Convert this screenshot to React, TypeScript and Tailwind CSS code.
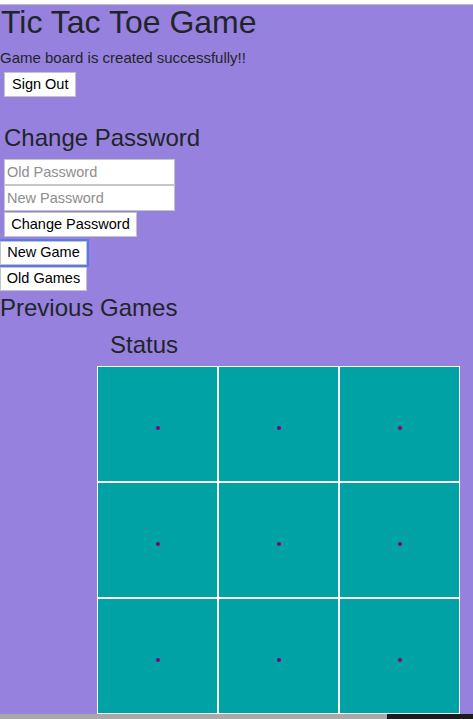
import React from 'react'

const cells = [0, 1, 2, 3, 4, 5, 6, 7, 8]

function Cell() {
    return (
        <div className="border border-white bg-[#00a2a6] flex items-center justify-center">
            <div className="w-[4px] h-[4px] rounded-full bg-[#800080] mt-[7px]" />
        </div>
    )
}

export default function App() {
    return (
        <div className="w-[473px] h-[719px] overflow-hidden bg-white font-['Liberation_Sans',Arial,sans-serif] text-[#212529]">
            <div className="h-[4px] bg-white border-b border-[#bdbdbd] box-content" />
            <main className="bg-[#9781de] flex flex-col items-start">
                <h1 className="text-[32px] leading-[32px] mt-[1px] ml-[1px]">Tic Tac Toe Game</h1>
                <p className="text-[15px] leading-[18px] mt-[11px]">Game board is created successfully!!</p>
                <button className="mt-[5px] ml-[4px] h-[25px] px-[7px] bg-white border border-[#c4c4c4] text-[14.5px] text-black">
                    Sign Out
                </button>

                <h3 className="text-[24px] leading-[28px] mt-[27px] ml-[4px]">Change Password</h3>
                <form className="flex flex-col items-start ml-[4px] mt-[7px]">
                    <input
                        placeholder="Old Password"
                        className="w-[171px] h-[26px] px-[2px] bg-white border border-[#c6c6c6] text-[14.5px] placeholder:text-[#8e8e8e]"
                    />
                    <input
                        placeholder="New Password"
                        className="w-[171px] h-[26px] px-[2px] bg-white border border-[#c6c6c6] text-[14.5px] placeholder:text-[#8e8e8e]"
                    />
                    <button type="button" className="mt-[1px] h-[25px] w-[133px] bg-white border border-[#c4c4c4] text-[14.5px] text-black">
                        Change Password
                    </button>
                </form>

                <button className="mt-[4px] h-[24px] w-[87px] bg-white border border-[#c4c4c4] text-[14.5px] text-black outline-2 outline-[#5a78f0]">
                    New Game
                </button>
                <button className="mt-[2px] h-[24px] w-[87px] bg-white border border-[#c4c4c4] text-[14.5px] text-black">
                    Old Games
                </button>

                <h3 className="text-[24px] leading-[28px] mt-[3px]">Previous Games</h3>
                <h3 className="text-[24px] leading-[28px] mt-[9px] ml-[110px]">Status</h3>

                <div className="mt-[7px] ml-[97px] grid grid-cols-3 grid-rows-3 w-[363px] h-[348px]">
                    {cells.map((c) => (
                        <Cell key={c} />
                    ))}
                </div>
            </main>
            <div className="h-[5px] bg-[#a9a9a9] flex justify-end">
                <div className="w-[86px] h-full bg-[#1c1c1e]" />
            </div>
        </div>
    )
}
